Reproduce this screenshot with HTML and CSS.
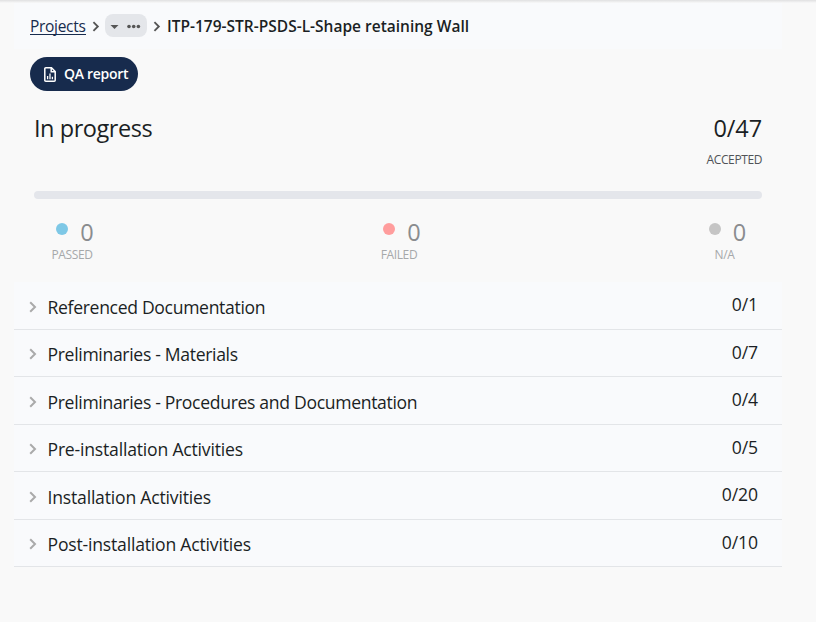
FILE: index.html
```html
<!DOCTYPE html>
<html lang="en">
<head>
<meta charset="utf-8">
<title>ITP-179-STR-PSDS-L-Shape retaining Wall</title>
<link rel="stylesheet" href="styles.css">
</head>
<body>
<svg class="defs" width="0" height="0"><symbol id="chevron" viewBox="0 0 8 12"><path d="M1.2 1.2 6 6 1.2 10.8" fill="none" stroke="currentColor" stroke-width="2"/></symbol></svg>
<main class="page">
  <nav class="crumbs">
    <a class="crumb-link" href="#">Projects</a>
    <svg class="sep"><use href="#chevron"/></svg>
    <button class="more" aria-label="More levels"><svg width="42" height="23" viewBox="0 0 42 23"><path d="M5.5 11h8l-4 4z"/><circle cx="24" cy="12.5" r="1.8"/><circle cx="28.7" cy="12.5" r="1.8"/><circle cx="33.4" cy="12.5" r="1.8"/></svg></button>
    <svg class="sep"><use href="#chevron"/></svg>
    <span class="crumb-current">ITP-179-STR-PSDS-L-Shape retaining Wall</span>
  </nav>
  <button class="report"><svg width="12" height="15" viewBox="0 0 12 15" fill="none" stroke="#fff" stroke-width="1.5"><path d="M1.8.8H7.5L11.2 4.5V13.2Q11.2 14.2 10.2 14.2H1.8Q.8 14.2 .8 13.2V1.8Q.8.8 1.8.8Z"/><path d="M7.2 1v3.8H11"/><path d="M3.6 9v3.2M6 6.5v5.7M8.4 9.8v2.4" stroke-width="1.3"/></svg><span>QA report</span></button>
  <section class="summary">
    <div class="headline">
      <h1>In progress</h1>
      <div class="accepted"><div class="total">0/47</div><div class="caption">ACCEPTED</div></div>
    </div>
    <div class="bar"></div>
    <div class="stats">
      <div class="stat passed"><div class="value"><i></i><b>0</b></div><span>PASSED</span></div>
      <div class="stat failed"><div class="value"><i></i><b>0</b></div><span>FAILED</span></div>
      <div class="stat na"><div class="value"><i></i><b>0</b></div><span>N/A</span></div>
    </div>
  </section>
  <ul class="groups">
    <li><svg><use href="#chevron"/></svg><span class="name tight">Referenced Documentation</span><span class="count">0/1</span></li>
    <li><svg><use href="#chevron"/></svg><span class="name tight">Preliminaries - Materials</span><span class="count">0/7</span></li>
    <li><svg><use href="#chevron"/></svg><span class="name tight">Preliminaries - Procedures and Documentation</span><span class="count">0/4</span></li>
    <li><svg><use href="#chevron"/></svg><span class="name">Pre-installation Activities</span><span class="count">0/5</span></li>
    <li><svg><use href="#chevron"/></svg><span class="name">Installation Activities</span><span class="count">0/20</span></li>
    <li><svg><use href="#chevron"/></svg><span class="name">Post-installation Activities</span><span class="count">0/10</span></li>
  </ul>
</main>
</body>
</html>
```
FILE: styles.css
```css
* { box-sizing: border-box; }
body {
  margin: 0;
  height: 622px;
  background: linear-gradient(#e0e0e1, #f9f9f9 3px) no-repeat #f9f9f9;
  color: #1b1f24;
  font-family: "Segoe UI", "Open Sans", "Noto Sans", sans-serif;
  overflow: hidden;
}
.defs { position: absolute; }
button { border: 0; padding: 0; font: inherit; }
.page { width: 768px; margin-left: 14px; padding-top: 3px; }
.crumbs { display: flex; align-items: center; height: 46px; padding: 0 0 1px 16px; background: #f9fafc; font-size: 15.5px; line-height: 22px; white-space: nowrap; }
.crumb-link { color: #172b4d; text-decoration: none; border-bottom: 1px solid #172b4d; height: 18px; line-height: 19px; width: 56px; letter-spacing: -.3px; }
.sep { width: 8px; height: 11px; margin: 2px 5px 0 6px; color: #555; flex: none; }
.more { width: 42px; height: 23px; border-radius: 8px; background: #e4e6ea; fill: #555; flex: none; }
.more svg { display: block; }
.crumb-current { margin-left: 1px; font-weight: 600; font-size: 15.5px; letter-spacing: 0; }
.report { display: flex; align-items: center; width: 108px; height: 34px; margin: 8px 0 0 16px; padding-left: 14px; gap: 8px; border-radius: 17px; background: #172b4d; color: #fff; font-size: 14px; font-weight: 600; letter-spacing: -.3px; white-space: nowrap; }
.report svg { flex: none; margin-top: 1px; }
.report span { margin-top: -1px; }
.summary { height: 191px; padding: 21px 20px 0; }
.headline { display: flex; justify-content: space-between; height: 79px; }
h1, .total { margin: 0; font-size: 23.5px; line-height: 32px; font-weight: 400; }
h1 { letter-spacing: -.45px; }
.total { letter-spacing: -.1px; }
.accepted { text-align: right; }
.caption { margin-top: 7px; font-size: 12px; line-height: 18px; color: #505357; letter-spacing: -.4px; }
.bar { height: 8px; border-radius: 4px; background: #e4e6eb; }
.stats { display: flex; justify-content: space-between; padding: 18px 18px 0 17px; }
.stat { display: flex; flex-direction: column; align-items: center; width: 42px; color: #a6a8aa; font-size: 12px; line-height: 16px; }
.stat span { letter-spacing: -.4px; }
.na { width: 39px; }
.value { display: flex; align-items: center; gap: 12px; height: 30px; padding-left: 6px; }
.value i { width: 12px; height: 12px; margin-bottom: 7px; border-radius: 50%; }
.value b { font-size: 23.5px; font-weight: 400; line-height: 30px; color: #8a8c8f; }
.passed i { background: #7ec8e6; }
.failed i { background: #ff9d9d; }
.na i { background: #c5c5c5; }
.groups { list-style: none; margin: 0; padding: 0; background: #f9fafc; }
.groups li { display: flex; align-items: center; height: 47.5px; padding: 0 24px 0 15px; border-bottom: 1px solid #e3e5e8; font-size: 17.6px; line-height: 24px; }
.groups svg { width: 8px; height: 12px; margin: 3px 10.5px 0 0; color: #aaa; }
.name { flex: 1; padding-top: 3px; letter-spacing: -.2px; }
.tight { letter-spacing: -.33px; }
.count { margin-top: -2px; letter-spacing: -.1px; }
```
